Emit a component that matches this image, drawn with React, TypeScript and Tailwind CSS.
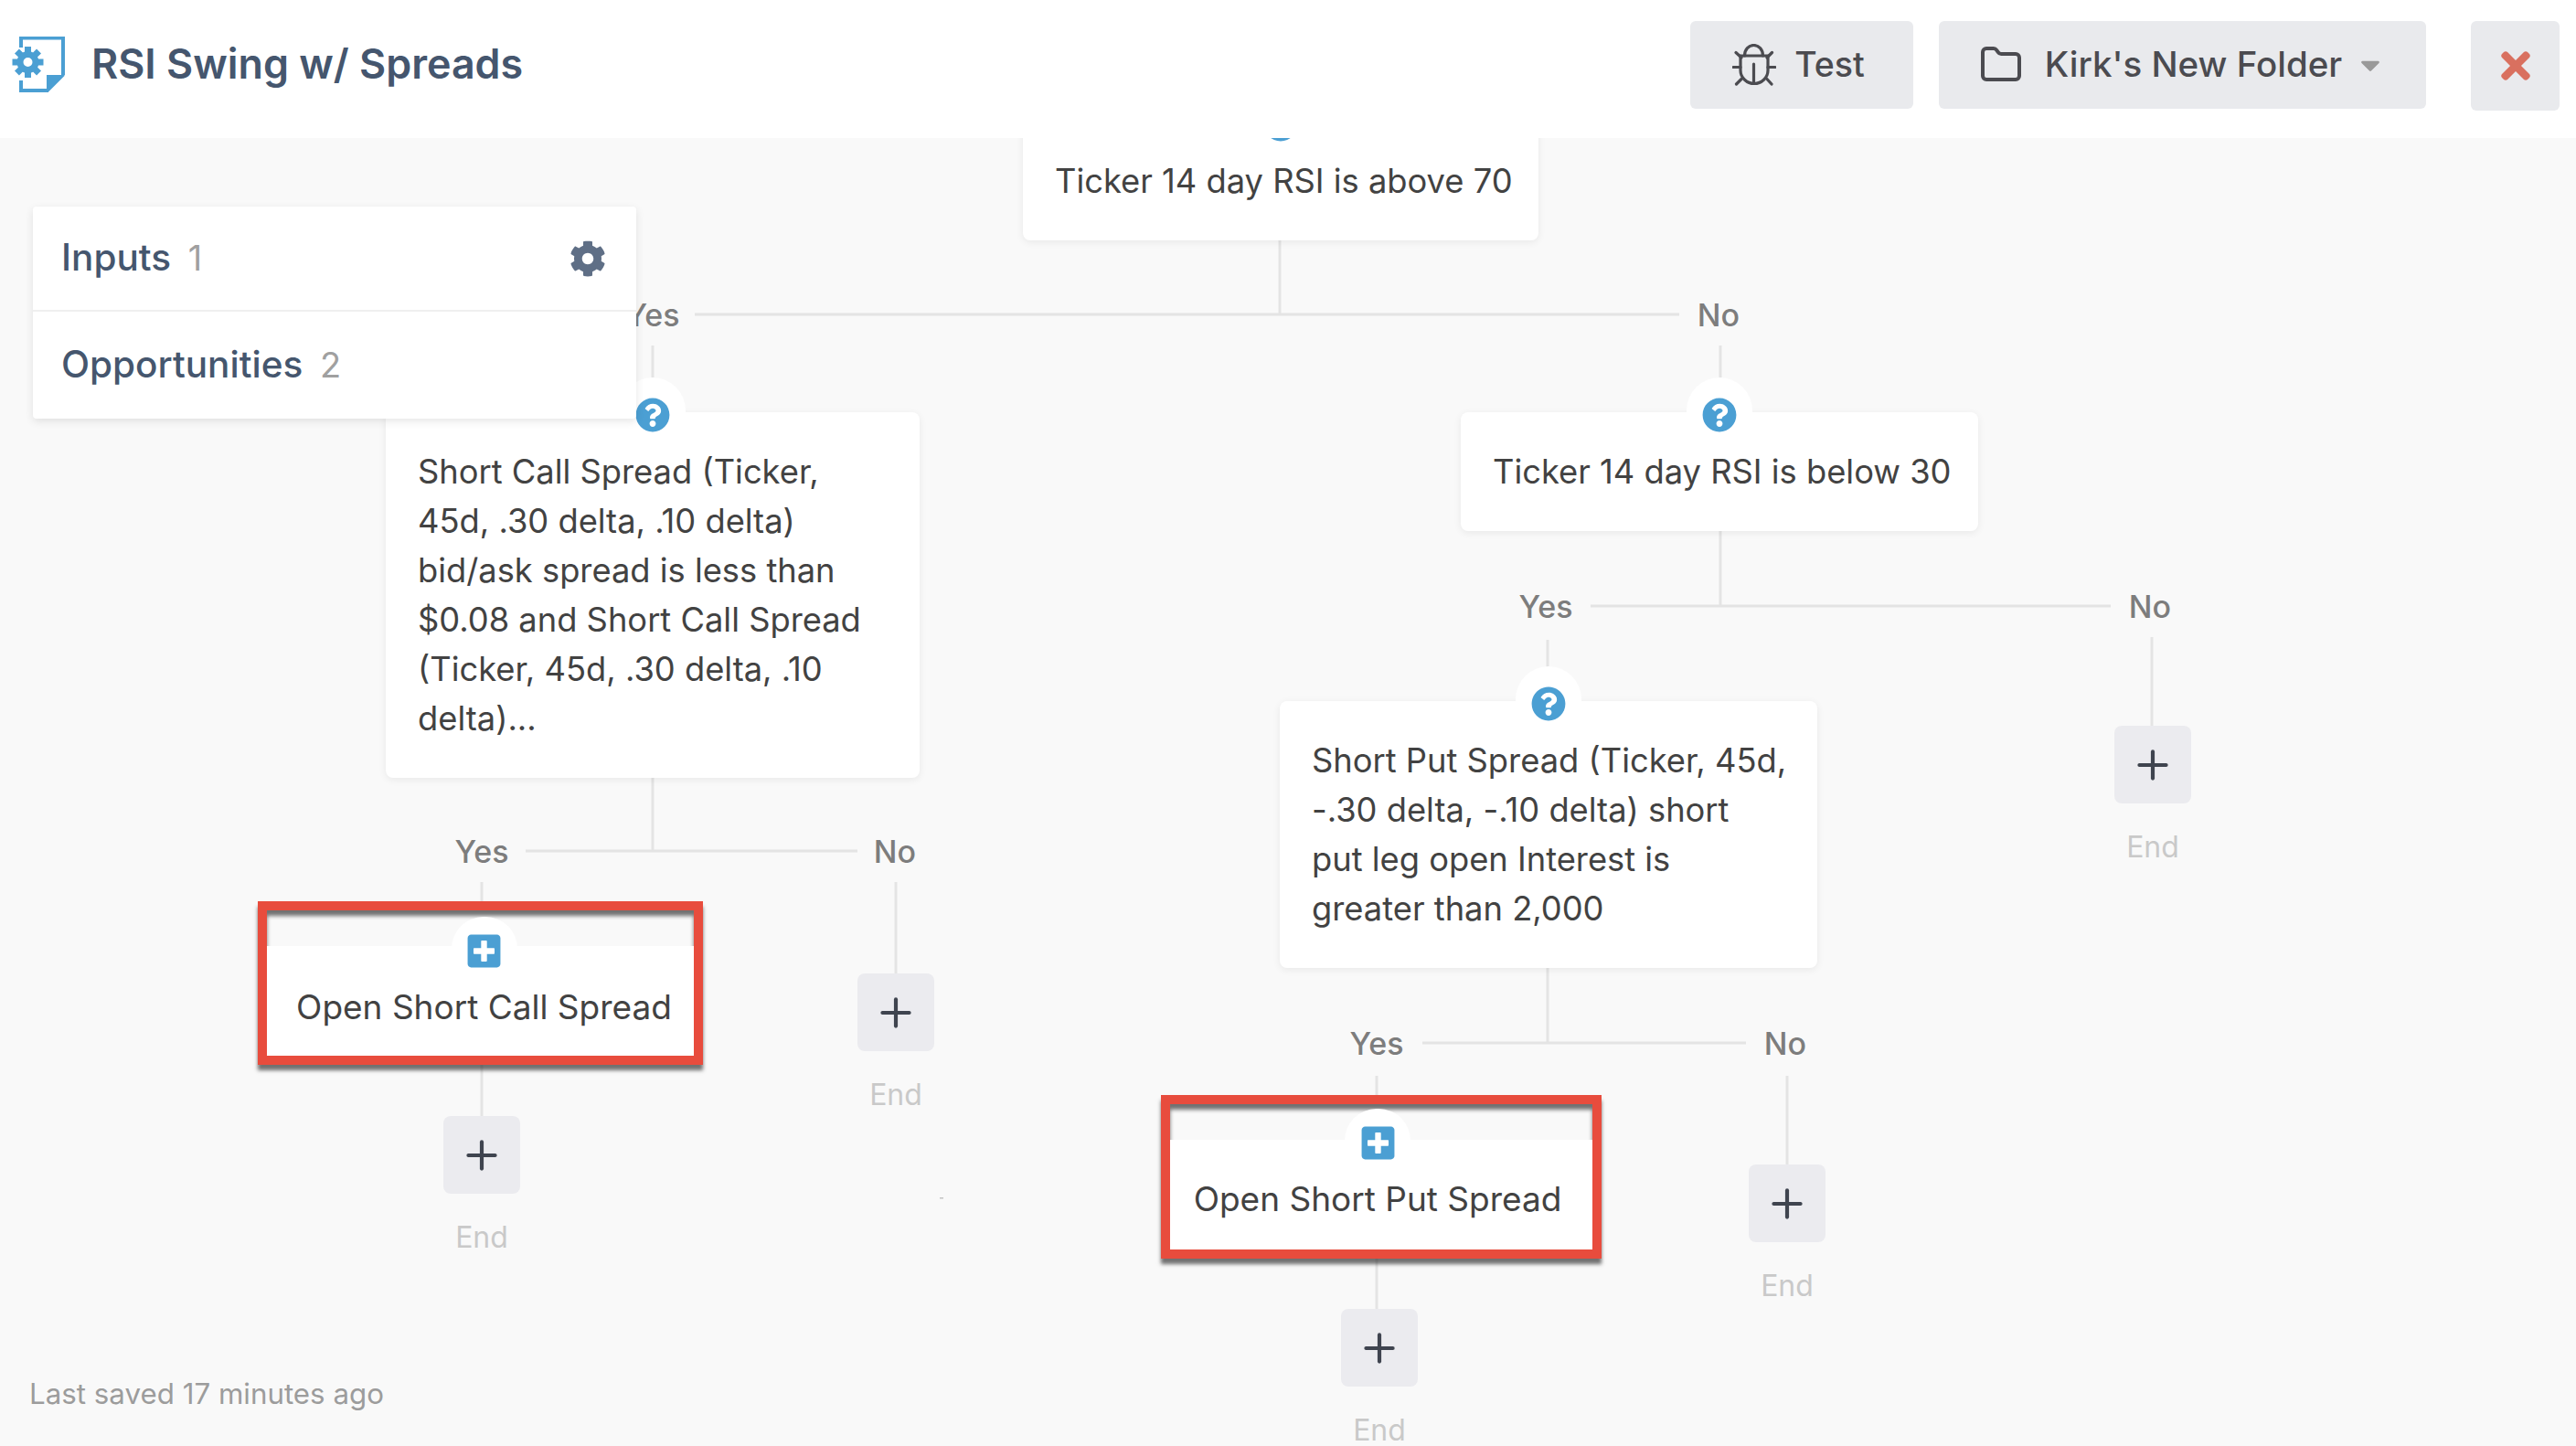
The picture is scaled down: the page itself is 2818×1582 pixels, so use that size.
import type { ReactNode } from "react";
import { Folder, Plus } from "lucide-react";
import { FaCaretDown, FaCog, FaPlusSquare, FaQuestionCircle, FaTimes } from "react-icons/fa";

// connector lines of the tree, in canvas coordinates: x1, y1, x2, y2
const LINES = [
  [1400, 112, 1400, 193],
  [760, 193, 1837, 193],
  [714, 227, 714, 262],
  [1882, 227, 1882, 262],
  [714, 699, 714, 780],
  [575, 780, 938, 780],
  [527, 814, 527, 835],
  [980, 814, 980, 914],
  [527, 1014, 527, 1071],
  [1882, 430, 1882, 512],
  [1740, 512, 2309, 512],
  [1693, 549, 1693, 584],
  [2354, 546, 2354, 643],
  [1693, 907, 1693, 990],
  [1556, 990, 1910, 990],
  [1506, 1026, 1506, 1047],
  [1955, 1026, 1955, 1123],
  [1506, 1226, 1506, 1281],
];

const TEETH = [0, 45, 90, 135, 180, 225, 270, 315];

function Label({ className, children }: { className: string; children: ReactNode }) {
  return (
    <span className={`absolute -translate-x-1/2 -translate-y-1/2 text-[34px] leading-none font-medium text-[#7d7d7d] ${className}`}>
      {children}
    </span>
  );
}

function Condition({ className, children }: { className: string; children: ReactNode }) {
  return (
    <div className={`absolute rounded-lg bg-white px-[35px] py-[38px] text-[36.3px] leading-[54px] whitespace-nowrap text-[#424242] shadow-[0_2px_8px_rgba(0,0,0,0.07)] ${className}`}>
      <div className="absolute -top-[38px] left-1/2 flex h-[76px] w-[72px] -translate-x-1/2 items-center justify-center rounded-full bg-white pt-[5px]">
        <FaQuestionCircle className="text-[38px] text-[#4b9fd3]" />
      </div>
      <div className="relative">{children}</div>
    </div>
  );
}

// the node sits a little off centre inside the red annotation box
function Action({ className, inner, children }: { className: string; inner: string; children: ReactNode }) {
  return (
    <div className={`absolute border-[10px] border-[#e84c3d] shadow-[0_6px_4px_rgba(40,40,40,0.65),inset_0_6px_4px_rgba(40,40,40,0.65)] ${className}`}>
      <div className="absolute inset-x-0 top-[39px] bottom-0 bg-white" />
      <div className={`relative flex flex-col items-center ${inner}`}>
        <div className="flex h-[70px] w-[72px] items-center justify-center rounded-full bg-white pt-[5px]">
          <FaPlusSquare className="text-[41px] text-[#4b9fd3]" />
        </div>
        <div className="mt-[2px] text-[37px] leading-[54px] whitespace-nowrap text-[#424242]">{children}</div>
      </div>
    </div>
  );
}

function AddStep({ className }: { className: string }) {
  return (
    <div className={`absolute flex w-[84px] flex-col items-center ${className}`}>
      <div className="flex h-[85px] w-[84px] items-center justify-center rounded-lg bg-[#ebebef]">
        <Plus className="h-[50px] w-[50px] text-[#3f444f]" strokeWidth={2} />
      </div>
      <span className="mt-[30px] text-[32px] leading-[36px] text-[#c9c9c9]">End</span>
    </div>
  );
}

function Logo() {
  return (
    <svg className="text-[#4b9fd3]" width="58" height="61" viewBox="0 0 58 61" fill="none">
      <path d="M10 12V1.5H56V42M40 59H10V48" stroke="currentColor" strokeWidth="4" />
      <path d="M38 42H57.5V43L40 60.5H38Z" fill="currentColor" />
      <g transform="translate(17.5 28)" fill="currentColor">
        {TEETH.map((deg) => (
          <rect key={deg} x="-3.5" y="-17" width="7" height="8" transform={`rotate(${deg})`} />
        ))}
      </g>
      <circle cx="17.5" cy="28" r="8.5" stroke="currentColor" strokeWidth="7" />
    </svg>
  );
}

function BugIcon() {
  return (
    <svg width="48" height="46" viewBox="0 0 48 46" fill="none" stroke="currentColor" strokeWidth="3.2" strokeLinecap="round">
      <path d="M13.5 13C13.5 6 18 1.5 23.5 1.5S33.5 6 33.5 13" />
      <path d="M9 13H39V29C39 37 32 43.5 24 43.5S9 37 9 29Z" />
      <path d="M23.5 22V42" />
      <path d="M4 9.5L10 15M43.5 9.5L38 15M1 25.5H9M39 25.5H47M4.5 44L10 38.5M43 44L38 38.5" />
    </svg>
  );
}

export default function App() {
  return (
    <div className="flex h-[1582px] w-[2818px] flex-col overflow-hidden bg-[#f9f9f9] font-['Inter',sans-serif]">
      <header className="relative z-20 flex h-[151px] shrink-0 items-start justify-between bg-white pr-[18px] pl-[13px]">
        <div className="mt-[40px] flex items-center gap-[29px]">
          <Logo />
          <h1 className="text-[44.8px] leading-[61px] font-semibold text-[#45566e]">RSI Swing w/ Spreads</h1>
        </div>
        <div className="mt-[23px] flex text-[38.5px] font-medium text-[#4b4b50]">
          <button className="flex h-[96px] w-[244px] items-center justify-center gap-[20px] rounded-md bg-[#e9eaed] pr-[7px] text-[37.5px]">
            <BugIcon />
            Test
          </button>
          <button className="ml-[28px] flex h-[96px] w-[533px] items-center justify-center rounded-md bg-[#e9eaed]">
            <Folder className="mr-[24px] h-[48px] w-[48px]" strokeWidth={2} />
            Kirk's New Folder
            <FaCaretDown className="ml-[14px] text-[34px] text-[#999]" />
          </button>
          <button className="ml-[49px] flex h-[98px] w-[97px] items-center justify-center rounded-md bg-[#e9eaed]">
            <FaTimes className="text-[46px] text-[#d9705f]" />
          </button>
        </div>
      </header>

      <main className="relative flex-1">
        <svg className="absolute inset-0" width="2818" height="1431" fill="none">
          {LINES.map(([x1, y1, x2, y2]) => (
            <line key={`${x1}-${y1}-${x2}`} x1={x1} y1={y1} x2={x2} y2={y2} stroke="#e4e4e4" strokeWidth="3" />
          ))}
          <rect x="1028" y="1159" width="4" height="1.5" fill="#c4c4c4" />
        </svg>

        <Condition className="-top-[18px] left-[1119px] w-[564px]">Ticker 14 day RSI is above 70</Condition>
        <Label className="top-[194px] left-[714px]">Yes</Label>
        <Label className="top-[194px] left-[1880px]">No</Label>

        <Condition className="top-[300px] left-[422px] w-[584px]">
          Short Call Spread (Ticker,
          <br />
          45d, .30 delta, .10 delta)
          <br />
          bid/ask spread is less than
          <br />
          $0.08 and Short Call Spread
          <br />
          (Ticker, 45d, .30 delta, .10
          <br />
          delta)...
        </Condition>
        <Condition className="top-[300px] left-[1598px] w-[566px]">Ticker 14 day RSI is below 30</Condition>

        <Label className="top-[781px] left-[527px]">Yes</Label>
        <Label className="top-[781px] left-[979px]">No</Label>
        <Action className="top-[835px] left-[282px] h-[179px] w-[487px]" inner="pt-[7px] pl-[8px]">
          Open Short Call Spread
        </Action>
        <AddStep className="top-[914px] left-[938px]" />
        <AddStep className="top-[1070px] left-[485px]" />

        <Label className="top-[513px] left-[1691px]">Yes</Label>
        <Label className="top-[513px] left-[2352px]">No</Label>
        <AddStep className="top-[643px] left-[2313px]" />

        <Condition className="top-[616px] left-[1400px] w-[588px]">
          Short Put Spread (Ticker, 45d,
          <br />
          -.30 delta, -.10 delta) short
          <br />
          put leg open Interest is
          <br />
          greater than 2,000
        </Condition>

        <Label className="top-[991px] left-[1506px]">Yes</Label>
        <Label className="top-[991px] left-[1953px]">No</Label>
        <Action className="top-[1047px] left-[1270px] h-[179px] w-[482px]" inner="pt-[5px] pr-[8px]">
          Open Short Put Spread
        </Action>
        <AddStep className="top-[1123px] left-[1913px]" />
        <AddStep className="top-[1281px] left-[1467px]" />

        <div className="absolute top-[75px] left-[36px] w-[660px] rounded-sm bg-white text-[40.5px] font-medium text-[#45566e] shadow-[0_3px_10px_rgba(0,0,0,0.1)]">
          <div className="flex h-[115px] items-center justify-between border-b-2 border-[#efefef] pr-[33px] pl-[31px]">
            <span>
              Inputs <span className="ml-[8px] text-[38px] font-normal text-[#a0a0a0]">1</span>
            </span>
            <FaCog className="text-[40px] text-[#5f6f86]" />
          </div>
          <div className="flex h-[117px] items-center pl-[31px]">
            <span>
              Opportunities <span className="ml-[8px] text-[38px] font-normal text-[#a0a0a0]">2</span>
            </span>
          </div>
        </div>

        <span className="absolute top-[1356px] left-[32px] text-[31.3px] leading-[36px] text-[#9c9c9c]">Last saved 17 minutes ago</span>
      </main>
    </div>
  );
}
